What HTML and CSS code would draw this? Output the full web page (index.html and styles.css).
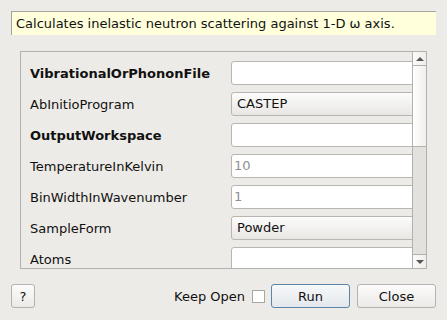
FILE: index.html
```html
<!DOCTYPE html>
<html lang="en">
<head>
    <meta charset="UTF-8">
    <title>Abins</title>
    <link rel="stylesheet" href="styles.css">
</head>
<body>
    <div class="dialog">
        <p class="description">Calculates inelastic neutron scattering against 1-D ω axis.</p>

        <div class="scroll-area">
            <div class="props">
                <div class="row">
                    <span class="label bold">VibrationalOrPhononFile</span>
                    <div class="field"></div>
                </div>
                <div class="row">
                    <span class="label">AbInitioProgram</span>
                    <div class="field combo">CASTEP</div>
                </div>
                <div class="row">
                    <span class="label bold">OutputWorkspace</span>
                    <div class="field"></div>
                </div>
                <div class="row">
                    <span class="label">TemperatureInKelvin</span>
                    <div class="field hint">10</div>
                </div>
                <div class="row">
                    <span class="label">BinWidthInWavenumber</span>
                    <div class="field hint">1</div>
                </div>
                <div class="row">
                    <span class="label">SampleForm</span>
                    <div class="field combo">Powder</div>
                </div>
                <div class="row">
                    <span class="label">Atoms</span>
                    <div class="field"></div>
                </div>
            </div>

            <div class="scrollbar">
                <div class="arrow up"></div>
                <div class="handle"></div>
                <div class="track"></div>
                <div class="arrow down"></div>
            </div>
        </div>

        <div class="buttons">
            <button class="btn btn-help">?</button>
            <div class="spacer"></div>
            <label class="keep-open">Keep Open <span class="check"></span></label>
            <button class="btn btn-default">Run</button>
            <button class="btn">Close</button>
        </div>
    </div>
</body>
</html>
```

FILE: styles.css
```css
/* 算法对话框 */
body {
    margin: 0;
    font-family: "DejaVu Sans", sans-serif;
    font-size: 13px;
    color: #111111;
    background-color: #edebe7;
}

.dialog {
    width: 447px;
    height: 320px;
    box-sizing: border-box;
    padding: 11px 11px 0 11px;
    display: flex;
    flex-direction: column;
}

/* 顶部说明 */
.description {
    margin: 0;
    height: 24px;
    box-sizing: border-box;
    padding-left: 4px;
    line-height: 23px;
    background-color: #ffffdc;
    border-top: 1px solid #a6a49f;
    border-left: 1px solid #a6a49f;
}

/* 属性列表 */
.scroll-area {
    margin: 16px 0 0 9px;
    width: 407px;
    height: 218px;
    box-sizing: border-box;
    border: 1px solid #b3b1ad;
    display: flex;
}

.props {
    flex: 1;
    overflow: hidden;
    padding: 9px 0 0 9px;
    display: flex;
    flex-direction: column;
    gap: 7px;
}

.row {
    display: flex;
    align-items: center;
    height: 24px;
    flex-shrink: 0;
}

.label {
    width: 201px;
    flex-shrink: 0;
}

.bold {
    font-weight: bold;
}

.field {
    flex: 0 0 200px;
    height: 24px;
    box-sizing: border-box;
    padding-left: 5px;
    line-height: 22px;
    background-color: #ffffff;
    border: 1px solid #b9b6b2;
    border-radius: 3px;
}

.combo {
    background: linear-gradient(#fcfcfc, #e9e7e4);
}

.hint {
    color: #8f8f8f;
    padding-left: 2px;
}

/* 滚动条 */
.scrollbar {
    width: 14px;
    box-sizing: border-box;
    border-left: 1px solid #b3b1ad;
    display: flex;
    flex-direction: column;
}

.arrow {
    height: 14px;
    box-sizing: border-box;
    background: linear-gradient(90deg, #fbfbfb, #efedea);
    display: flex;
    align-items: center;
    justify-content: center;
}

.arrow::after {
    content: "";
    border-left: 4px solid transparent;
    border-right: 4px solid transparent;
}

.up {
    border-bottom: 1px solid #b3b1ad;
}

.up::after {
    border-bottom: 4px solid #555;
}

.down {
    border-top: 1px solid #b3b1ad;
}

.down::after {
    border-top: 4px solid #555;
}

.handle {
    height: 81px;
    box-sizing: border-box;
    background: linear-gradient(90deg, #ffffff, #f1efec);
    border-bottom: 1px solid #b3b1ad;
}

.track {
    flex: 1;
    background-color: #e2e1de;
}

/* 底部按钮 */
.buttons {
    margin-top: 15px;
    display: flex;
    align-items: center;
}

.spacer {
    flex: 1;
}

.btn {
    height: 24px;
    width: 79px;
    margin-left: 7px;
    font-family: inherit;
    font-size: 13px;
    color: #111111;
    background: linear-gradient(#fbfbfb, #eceae7);
    border: 1px solid #b5b3af;
    border-radius: 3px;
    padding: 0;
}

.btn-help {
    width: 24px;
    margin-left: 0;
}

.btn-default {
    margin-left: 6px;
    border-color: #5a84a8;
    background: linear-gradient(#f6f8fa, #e4e8ec);
}

.keep-open {
    display: flex;
    align-items: center;
    gap: 7px;
}

.check {
    width: 13px;
    height: 13px;
    box-sizing: border-box;
    background-color: #ffffff;
    border: 1px solid #a9a7a3;
}
```
